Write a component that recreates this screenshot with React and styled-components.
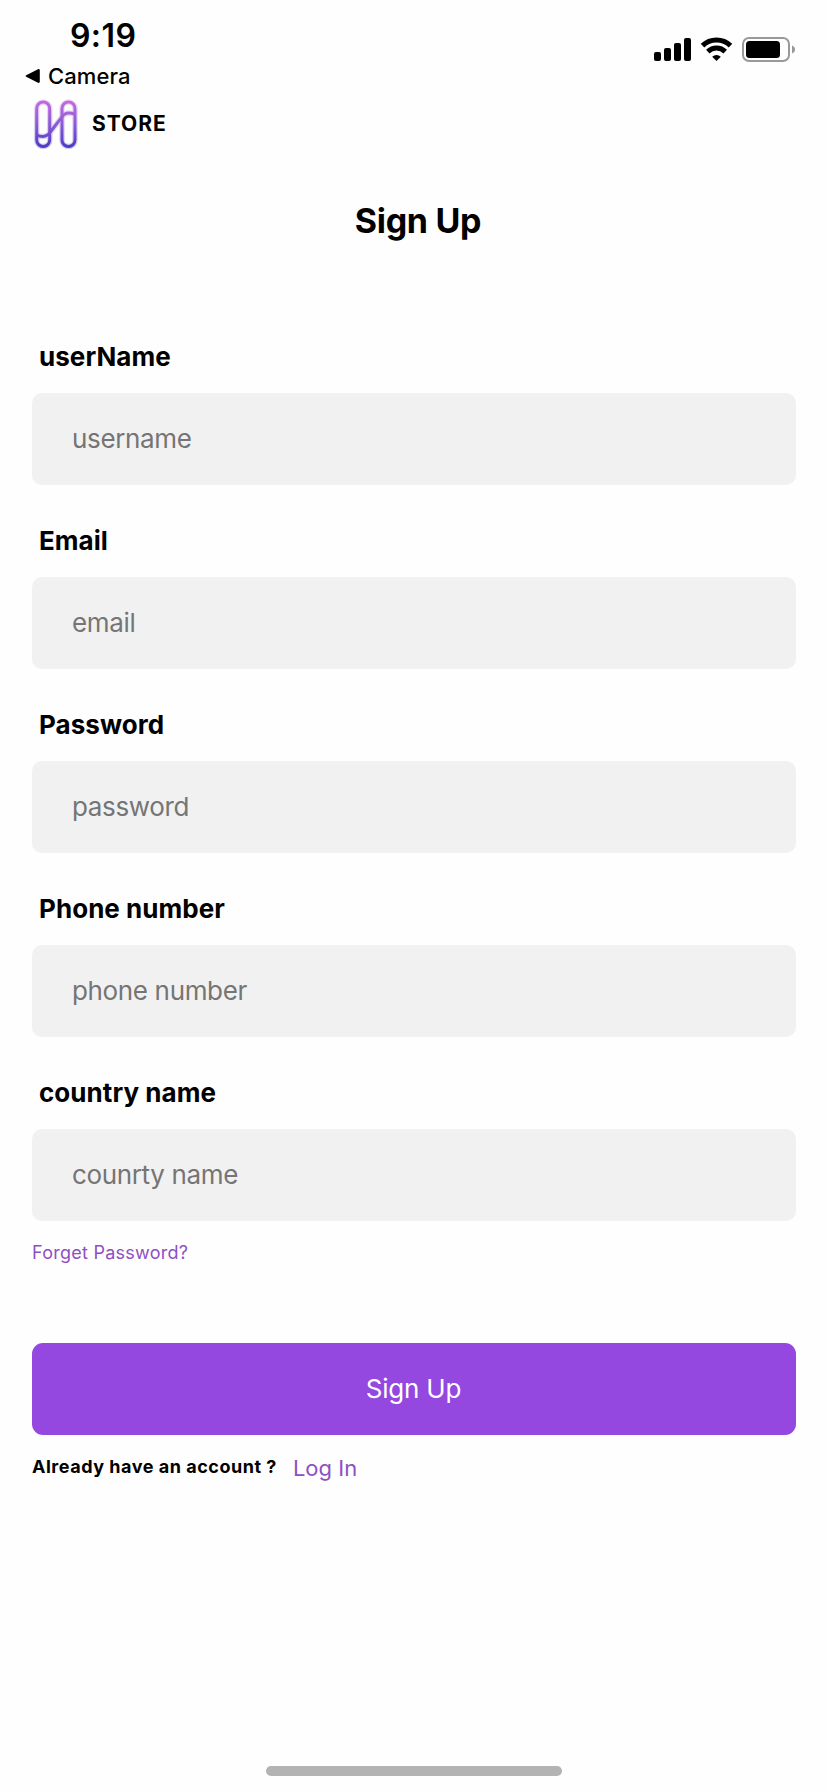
import React from 'react';
import styled, { createGlobalStyle } from 'styled-components';

const GlobalStyle = createGlobalStyle`
  * {
    box-sizing: border-box;
  }
  body {
    margin: 0;
    background: #fefefe;
    color: #000;
    font-family: Inter, 'Liberation Sans', sans-serif;
  }
`;

const Screen = styled.div`
  display: flex;
  flex-direction: column;
  width: 828px;
  height: 1792px;
  overflow: hidden;
`;

const StatusBar = styled.div`
  display: flex;
  justify-content: space-between;
  height: 94px;
  padding: 16px 33px 0 25px;
`;

const Time = styled.div`
  padding-left: 45px;
  font-size: 32px;
  font-weight: 600;
  line-height: 40px;
  letter-spacing: 0.4px;
`;

const BackLink = styled.div`
  display: flex;
  align-items: center;
  gap: 8px;
  margin-top: 5px;
  font-size: 22px;
  font-weight: 500;
  line-height: 30px;
  letter-spacing: 0.1px;
`;

const StatusIcons = styled.div`
  display: flex;
  align-items: flex-start;
  padding-top: 21px;
`;

const Brand = styled.div`
  display: flex;
  align-items: center;
  gap: 10px;
  height: 60px;
  padding-left: 32px;
`;

const BrandName = styled.div`
  padding-bottom: 2px;
  font-size: 21px;
  font-weight: 700;
  letter-spacing: 1px;
`;

const Title = styled.h1`
  margin: 47px 0 0;
  padding-left: 8px;
  font-size: 34px;
  font-weight: 700;
  line-height: 40px;
  letter-spacing: -0.3px;
  text-align: center;
`;

const Form = styled.form`
  display: flex;
  flex-direction: column;
  padding: 96px 32px 0;
`;

const Field = styled.label`
  display: flex;
  flex-direction: column;
  margin-bottom: 36px;
  &:last-of-type {
    margin-bottom: 17px;
  }
`;

const Label = styled.span`
  margin-bottom: 16px;
  padding-left: 7px;
  font-size: 26px;
  font-weight: 700;
  line-height: 40px;
  letter-spacing: 0.05px;
`;

const Input = styled.input`
  width: 100%;
  height: 92px;
  padding: 0 40px 1px;
  border: 0;
  border-radius: 10px;
  outline: 0;
  background: #f1f1f1;
  font-family: inherit;
  font-size: 26px;
  letter-spacing: -0.35px;
  &::placeholder {
    color: #757575;
    opacity: 1;
  }
`;

const Link = styled.a`
  color: #8e4fc4;
  font-size: ${props => props.$large ? '22px' : '18px'};
  line-height: 30px;
  letter-spacing: ${props => props.$large ? '0' : '0.25px'};
  cursor: pointer;
`;

const SubmitButton = styled.button`
  height: 92px;
  margin-top: 75px;
  padding: 0 1px 2px 0;
  border: 0;
  border-radius: 11px;
  background: #9448e0;
  color: #fff;
  font-family: inherit;
  font-size: 26px;
  letter-spacing: -0.2px;
`;

const AccountRow = styled.div`
  display: flex;
  gap: 16px;
  padding-top: 18px;
`;

const AccountText = styled.span`
  font-size: 18px;
  font-weight: 700;
  line-height: 27px;
  letter-spacing: 0.52px;
`;

const HomeIndicator = styled.div`
  width: 296px;
  height: 10px;
  margin: auto auto 16px;
  border-radius: 5px;
  background: #b3b3b3;
`;

const BackArrow = () => (
  <svg width='15' height='14' viewBox='0 0 15 14'>
    <path d='M1.2 6.2 13 .2q1.8-.5 1.8 1.200v11.200q0 1.700-1.800 1.200L1.200 7.800q-1.200-.8 0-1.600z' />
  </svg>
);

// Signal bars, wifi and battery
const DeviceIcons = () => (
  <svg width='142' height='26' viewBox='652 37 142 26'>
    <rect x='653' y='52' width='7' height='9' rx='2' />
    <rect x='663' y='48' width='7' height='13' rx='2' />
    <rect x='673' y='43' width='7' height='18' rx='2' />
    <rect x='683' y='38' width='7' height='23' rx='2' />
    <g fill='none' stroke='#000' strokeWidth='5'>
      <path d='M701.500 45.600a20 20 0 0 1 28 0' />
      <path d='M706.800 51.600a12.500 12.500 0 0 1 17.400 0' />
    </g>
    <path d='M715.500 61l-4.300-4.300a6.200 6.200 0 0 1 8.600 0z' />
    <rect x='742' y='38' width='46' height='23' rx='6' fill='none' stroke='#999' strokeWidth='2' />
    <rect x='745' y='41' width='34' height='17' rx='3.500' />
    <path d='M791 45.500q3 1.200 3 4t-3 4z' fill='#999' />
  </svg>
);

const brandShape = (
  <>
    <rect x='36.700' y='102' width='13' height='44.500' rx='6.500' />
    <rect x='62' y='102' width='13' height='44.500' rx='6.500' />
    <path d='M37 135q2 1.500 6 1.500 4 0 6.500-3.500L62 117q2.500-4 6.500-4 4 0 6 1.200' />
  </>
);

// Pill shaped "H" mark, the wide faint stroke is its glow
const BrandIcon = () => (
  <svg width='50' height='50' viewBox='32 99 50 50'>
    <defs>
      <linearGradient id='brand' gradientUnits='userSpaceOnUse' x1='0' y1='100' x2='0' y2='148'>
        <stop offset='0' stopColor='#c46be0' />
        <stop offset='0.5' stopColor='#8a5bd6' />
        <stop offset='1' stopColor='#4a3cc4' />
      </linearGradient>
    </defs>
    <g fill='none' stroke='url(#brand)'>
      <g strokeWidth='5.500' opacity='0.250'>{brandShape}</g>
      <g strokeWidth='3'>{brandShape}</g>
    </g>
  </svg>
);

const fields = [
  { label: 'userName', placeholder: 'username', type: 'text' },
  { label: 'Email', placeholder: 'email', type: 'email' },
  { label: 'Password', placeholder: 'password', type: 'password' },
  { label: 'Phone number', placeholder: 'phone number', type: 'tel' },
  { label: 'country name', placeholder: 'counrty name', type: 'text' }
];

const App = () => (
  <Screen>
    <GlobalStyle />
    <StatusBar>
      <div>
        <Time>9:19</Time>
        <BackLink><BackArrow />Camera</BackLink>
      </div>
      <StatusIcons><DeviceIcons /></StatusIcons>
    </StatusBar>
    <Brand>
      <BrandIcon />
      <BrandName>STORE</BrandName>
    </Brand>
    <Title>Sign Up</Title>
    <Form>
      {fields.map(({ label, placeholder, type }) => (
        <Field key={label}>
          <Label>{label}</Label>
          <Input type={type} placeholder={placeholder} />
        </Field>
      ))}
      <Link>Forget Password?</Link>
      <SubmitButton type='button'>Sign Up</SubmitButton>
      <AccountRow>
        <AccountText>Already have an account ?</AccountText>
        <Link $large>Log In</Link>
      </AccountRow>
    </Form>
    <HomeIndicator />
  </Screen>
);

export default App;
